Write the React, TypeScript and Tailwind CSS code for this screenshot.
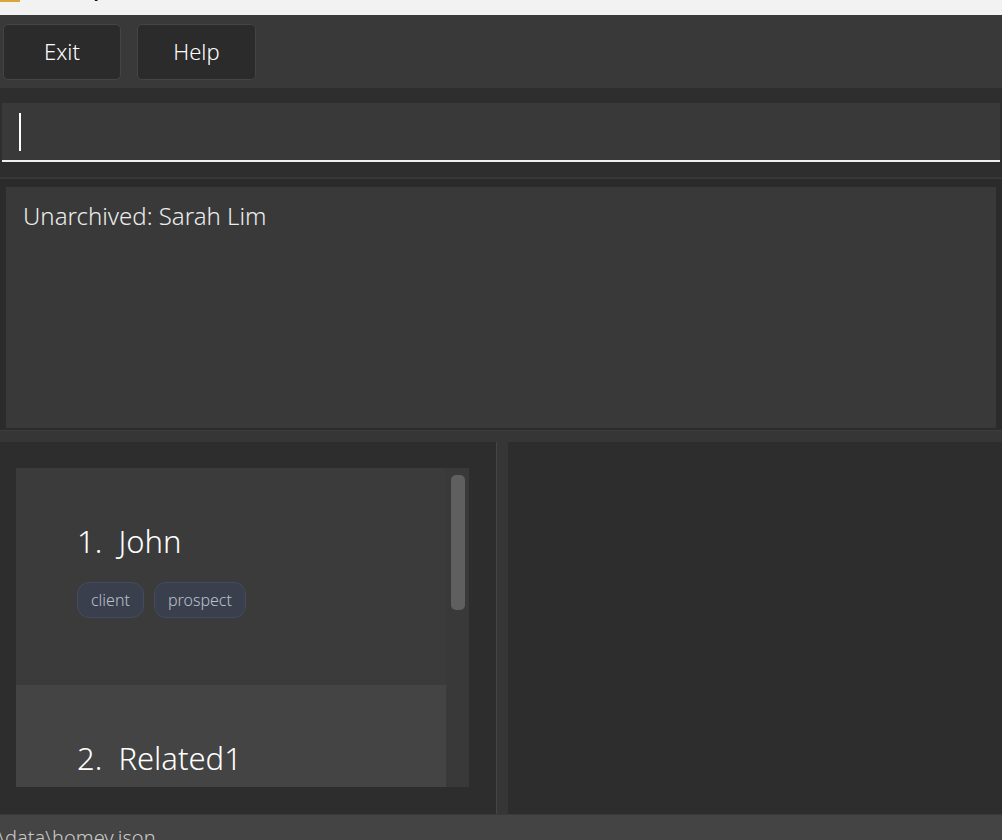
import React from 'react'

const font = { fontFamily: '"Noto Sans", "Open Sans", sans-serif' }

function Tag({ label }: { label: string }) {
  return (
    <span className="h-[36px] px-[13px] flex items-center rounded-[12px] border border-[#454b5c] bg-[#3a3f4e] text-[16px] font-light text-[#bcc0cb]">
      {label}
    </span>
  )
}

function PersonCard({ index, name, tags, tall, alt }: { index: number; name: string; tags: string[]; tall: boolean; alt: boolean }) {
  return (
    <div className={alt ? 'bg-[#444444] h-[102px] pl-[61px] pt-[52px]' : 'bg-[#3b3b3b] h-[217px] pl-[61px] pt-[52px]'}>
      <div className="text-[31px] leading-[42px] font-light text-white">
        {index}.&nbsp; {name}
      </div>
      {tall && (
        <div className="flex gap-[10px] mt-[20px]">
          {tags.map(t => <Tag key={t} label={t} />)}
        </div>
      )}
    </div>
  )
}

export default function App() {
  return (
    <div className="w-[1002px] h-[840px] overflow-hidden flex flex-col bg-[#2d2d2d]" style={font}>
      {/* title bar, mostly cut off */}
      <div className="h-[15px] bg-[#f2f2f3] relative overflow-hidden shrink-0">
        <div className="absolute left-0 top-0 w-[20px] h-[2px] bg-[#d9a63a]" />
        <div className="absolute left-[58px] top-[-16px] text-[13px] text-black">Homey</div>
      </div>

      {/* menu bar */}
      <div className="h-[73px] bg-[#393939] flex items-center gap-[16px] px-[3px] shrink-0">
        <button className="w-[118px] h-[56px] rounded-[5px] border border-[#444444] bg-[#2b2b2b] text-white text-[22px] font-light">Exit</button>
        <button className="w-[119px] h-[56px] rounded-[5px] border border-[#444444] bg-[#2b2b2b] text-white text-[22px] font-light">Help</button>
      </div>

      {/* command box */}
      <div className="pt-[15px] px-[2px] bg-[#2e2e2e] shrink-0">
        <div className="h-[59px] bg-[#393939] border-b-2 border-[#f0f0f0] flex items-center pl-[17px]">
          <div className="w-[2px] h-[38px] bg-white" />
        </div>
      </div>
      <div className="h-[15px] bg-[#2e2e2e] shrink-0" />
      <div className="h-[2px] bg-[#383838] shrink-0" />

      {/* result display */}
      <div className="bg-[#2b2b2b] pt-[8px] pb-[2px] px-[6px] shrink-0">
        <div className="h-[241px] bg-[#393939] px-[17px] pt-[11px] text-[24px] font-light text-[#ececec]">
          Unarchived: Sarah Lim
        </div>
      </div>
      <div className="h-[1px] bg-[#3d3d3d] shrink-0" />
      <div className="h-[11px] bg-[#363636] shrink-0" />

      {/* split panels */}
      <div className="flex-1 flex min-h-0">
        <div className="w-[496px] bg-[#2d2d2d] pt-[26px] pl-[16px]">
          <div className="w-[453px] h-[319px] bg-[#3a3a3a] flex overflow-hidden">
            <div className="w-[430px] flex flex-col">
              <PersonCard index={1} name="John" tags={['client', 'prospect']} tall alt={false} />
              <PersonCard index={2} name="Related1" tags={[]} tall={false} alt />
            </div>
            <div className="flex-1 bg-[#393939] pt-[7px] pl-[5px]">
              <div className="w-[14px] h-[135px] rounded-[5px] bg-[#5f5f5f]" />
            </div>
          </div>
        </div>
        <div className="w-[1px] bg-[#454545]" />
        <div className="w-[11px] bg-[#363636]" />
        <div className="flex-1 bg-[#2d2d2d]" />
      </div>

      {/* status bar */}
      <div className="h-[26px] shrink-0 bg-[#444444] border-t border-[#3a3a3a] relative overflow-hidden">
        <div className="absolute left-[-2px] top-[8px] text-[20px] font-light text-[#c8c8c8] whitespace-nowrap">\data\homey.json</div>
      </div>
    </div>
  )
}
